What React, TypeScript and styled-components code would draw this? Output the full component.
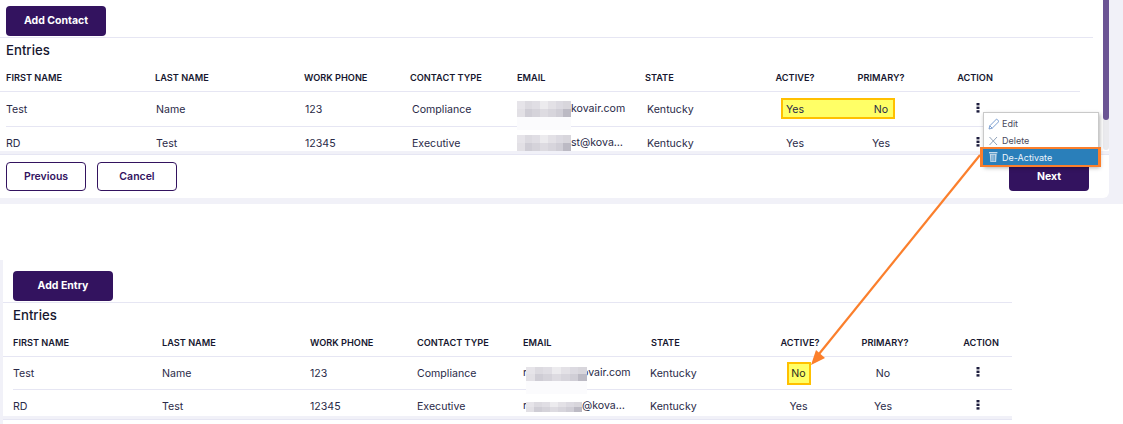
import styled, { createGlobalStyle } from "styled-components";

interface Contact {
  first: string;
  last: string;
  phone: string;
  type: string;
  state: string;
  active: string;
  primary: string;
}

const contacts: Contact[] = [
  { first: "Test", last: "Name", phone: "123", type: "Compliance", state: "Kentucky", active: "Yes", primary: "No" },
  { first: "RD", last: "Test", phone: "12345", type: "Executive", state: "Kentucky", active: "Yes", primary: "Yes" },
];

const pixelShades = [
  ["#e6e4e9", "#dcdae0", "#e0dee4", "#ecebee", "#e3e1e6", "#dcdae1", "#d8d6dc"],
  ["#e2e0e5", "#cfcdd5", "#d5d3da", "#dddbe1", "#d7d5dc", "#d0ced6", "#bcbac4"],
];

interface PixelProps {
  $left: number;
  $top: number;
  $width: number;
  $rowHeight: number;
  $tail?: boolean;
}

function Pixels(props: PixelProps) {
  return (
    <PixelWrap {...props}>
      {pixelShades.map((row, r) => (
        <PixelRow key={r} $height={props.$rowHeight}>
          {row.map((c, i) => (
            <Pixel key={i} style={{ background: c }} />
          ))}
        </PixelRow>
      ))}
      {props.$tail && <PixelTail />}
    </PixelWrap>
  );
}

function Kebab() {
  return (
    <svg width="4" height="10" viewBox="0 0 4 10">
      <rect x="0.5" y="0" width="3" height="2.4" fill="#1c1c3c" />
      <rect x="0.5" y="3.6" width="3" height="2.4" fill="#1c1c3c" />
      <rect x="0.5" y="7.2" width="3" height="2.4" fill="#1c1c3c" />
    </svg>
  );
}

function Table({ variant }: { variant: "top" | "bottom" }) {
  const isTop = variant === "top";
  const columns = isTop
    ? "149px 149px 106px 107px 128px 100px 100px 72px 1fr"
    : "149px 148px 107px 106px 128px 100px 98px 68px 1fr";
  return (
    <>
      <HeadRow $columns={columns}>
        <Head>FIRST NAME</Head>
        <Head>LAST NAME</Head>
        <Head>WORK PHONE</Head>
        <Head>CONTACT TYPE</Head>
        <Head>EMAIL</Head>
        <Head>STATE</Head>
        <Head $center>ACTIVE?</Head>
        <Head $center $pad={isTop ? "0" : "0 0 0 4px"}>PRIMARY?</Head>
        <Head $center $pad={isTop ? "0 47px 0 0" : "0 0 0 33px"}>ACTION</Head>
      </HeadRow>
      {contacts.map((c, i) => (
        <Row
          key={c.first}
          $columns={columns}
          $height={i === 0 ? (isTop ? 35 : 33) : isTop ? 24 : 26}
          $lift={i === 0 ? 0 : isTop ? 8 : 6}
          $rule={i === 0}
        >
          <Cell>{c.first}</Cell>
          <Cell $pad={isTop ? "0 0 0 1px" : "0"}>{c.last}</Cell>
          <Cell $pad={isTop ? "0 0 0 1px" : "0"}>{c.phone}</Cell>
          <Cell $pad={isTop ? "0 0 0 2px" : "0"}>{c.type}</Cell>
          <EmailCell>
            {isTop ? (
              <>
                <EmailText $offset={54}>{i === 0 ? "kovair.com" : "st@kova…"}</EmailText>
                <Pixels $left={0} $top={0} $width={54} $rowHeight={8} $tail={i === 0} />
              </>
            ) : (
              <>
                <EmailText $offset={0}>r</EmailText>
                <EmailText $offset={59}>{i === 0 ? "ovair.com" : "@kova…"}</EmailText>
                {i === 0 ? (
                  <Pixels $left={3} $top={2} $width={61} $rowHeight={7} $tail />
                ) : (
                  <Pixels $left={3} $top={4} $width={56} $rowHeight={5} />
                )}
              </>
            )}
          </EmailCell>
          <Cell $pad={isTop ? "0 0 0 2px" : "0 1px 0 0"} $shift={isTop ? 0 : -1}>{c.state}</Cell>
          <Cell $center $pad={isTop ? "0" : "0 3px 0 0"}>
            {!isTop && i === 0 ? <Mark>No</Mark> : c.active}
          </Cell>
          <Cell $center>{isTop && i === 0 ? "No" : c.primary}</Cell>
          <Cell $center $pad={isTop ? "0 42px 0 0" : "0 0 0 27px"}>
            <Kebab />
          </Cell>
        </Row>
      ))}
    </>
  );
}

function App() {
  return (
    <Page>
      <GlobalStyle />
      <TopFrame>
        <TopPanel>
          <Toolbar $inset={16}>
            <PrimaryBtn>Add Contact</PrimaryBtn>
          </Toolbar>
          <Title>Entries</Title>
          <Table variant="top" />
          <Band />
          <Footer>
            <BtnGroup>
              <OutlineBtn>Previous</OutlineBtn>
              <OutlineBtn>Cancel</OutlineBtn>
            </BtnGroup>
            <PrimaryBtn $small>Next</PrimaryBtn>
          </Footer>
          <Highlight />
          <ScrollTrack>
            <ScrollThumb />
          </ScrollTrack>
          <Menu>
            <MenuItem>
              <svg width="12" height="12" viewBox="0 0 12 12" fill="none" stroke="#6d94cc" strokeWidth="0.9">
                <path d="M1 11l.8-3.2L8.6 1l2.4 2.4-6.8 6.8z" />
                <path d="M1.8 7.8l2.4 2.4" />
              </svg>
              Edit
            </MenuItem>
            <MenuItem>
              <svg width="12" height="12" viewBox="0 0 12 12" fill="none" stroke="#8597b0" strokeWidth="0.9">
                <path d="M1.5 2l7.5 8M9 2l-7.5 8" />
              </svg>
              Delete
            </MenuItem>
            <ActiveItem>
              <svg width="12" height="12" viewBox="0 0 12 12" fill="#c5d9ea">
                <rect x="1" y="1" width="8.4" height="1.4" />
                <path d="M1.8 3h6.8l-.5 8H2.3z" />
                <path d="M3.8 3.8v6.4M5.2 3.8v6.4M6.6 3.8v6.4" stroke="#2a7fba" strokeWidth="0.6" />
              </svg>
              De-Activate
            </ActiveItem>
          </Menu>
        </TopPanel>
      </TopFrame>
      <BottomPanel>
        <Toolbar $inset={0}>
          <PrimaryBtn>Add Entry</PrimaryBtn>
        </Toolbar>
        <Title>Entries</Title>
        <Table variant="bottom" />
        <Band />
      </BottomPanel>
      <Arrow width="1123" height="424" viewBox="0 0 1123 424">
        <path d="M980 155L819 354" stroke="#fb7f2c" strokeWidth="2.2" fill="none" />
        <path d="M811 365L816 350L825 358z" fill="#fb7f2c" />
      </Arrow>
    </Page>
  );
}

const GlobalStyle = createGlobalStyle`
  html, body {
    margin: 0;
    padding: 0;
    background: #fff;
    overflow: hidden;
  }
  body {
    font-family: Inter, "Liberation Sans", sans-serif;
    color: #23233f;
  }
`;

const Page = styled.div`
  position: relative;
  width: 1123px;
  height: 424px;
  overflow: hidden;
  background: #fff;
`;

const TopFrame = styled.div`
  height: 204px;
  background: #f1f1f8;
`;

const TopPanel = styled.div`
  --lead: 6px;
  position: relative;
  width: 1109px;
  height: 198px;
  box-sizing: border-box;
  padding-top: 6px;
  background: #fff;
  border-bottom-right-radius: 6px;
`;

const BottomPanel = styled.div`
  --lead: 10px;
  width: 1012px;
  height: 164px;
  margin-top: 56px;
  padding-top: 11px;
  box-sizing: border-box;
  border-left: 3px solid #f1f1f8;
`;

const Toolbar = styled.div<{ $inset: number }>`
  height: 30px;
  margin-right: ${(p) => p.$inset}px;
  padding-left: var(--lead);
  padding-bottom: 1px;
  border-bottom: 1px solid #e6e6f3;
`;

const PrimaryBtn = styled.button<{ $small?: boolean }>`
  display: block;
  width: ${(p) => (p.$small ? "80px" : "100px")};
  height: ${(p) => (p.$small ? "29px" : "30px")};
  padding: 0 0 1px;
  border: none;
  border-radius: 4px;
  background: #33135f;
  color: #fff;
  font-family: inherit;
  font-size: 10.5px;
  font-weight: 700;
`;

const Title = styled.div`
  height: 26px;
  padding-left: var(--lead);
  line-height: 24px;
  font-size: 13.2px;
  font-weight: 500;
  color: #17172f;
`;

const HeadRow = styled.div<{ $columns: string }>`
  display: grid;
  grid-template-columns: ${(p) => p.$columns};
  align-items: center;
  width: 1080px;
  max-width: 100%;
  height: 28px;
  padding-left: var(--lead);
  box-sizing: border-box;
  border-bottom: 1px solid #e6e6f3;
`;

const Row = styled.div<{ $columns: string; $height: number; $lift: number; $rule: boolean }>`
  position: relative;
  z-index: 1;
  display: grid;
  grid-template-columns: ${(p) => p.$columns};
  align-items: center;
  width: calc(1080px - var(--lead));
  max-width: calc(100% - var(--lead));
  height: ${(p) => p.$height}px;
  margin-left: var(--lead);
  padding-top: ${(p) => p.$lift}px;
  box-sizing: border-box;
  border-bottom: ${(p) => (p.$rule ? "1px solid #e6e6f3" : "none")};
`;

const Head = styled.div<{ $center?: boolean; $pad?: string }>`
  padding: ${(p) => p.$pad || "0"};
  font-size: 9.2px;
  font-weight: 600;
  color: #17172f;
  white-space: nowrap;
  text-align: ${(p) => (p.$center ? "center" : "left")};
`;

const Cell = styled.div<{ $center?: boolean; $pad?: string; $shift?: number }>`
  padding: ${(p) => p.$pad || "0"};
  margin-left: ${(p) => p.$shift || 0}px;
  font-size: 10.6px;
  color: #2a2a48;
  white-space: nowrap;
  text-align: ${(p) => (p.$center ? "center" : "left")};
`;

const EmailCell = styled.div`
  position: relative;
  height: 16px;
  font-size: 10.6px;
  line-height: 16px;
  color: #2a2a48;
  white-space: nowrap;
`;

const EmailText = styled.span<{ $offset: number }>`
  position: absolute;
  left: ${(p) => p.$offset}px;
  top: 0;
`;

const PixelWrap = styled.div<PixelProps>`
  position: absolute;
  left: ${(p) => p.$left}px;
  top: ${(p) => p.$top}px;
  width: ${(p) => p.$width}px;
  display: flex;
  flex-direction: column;
`;

const PixelRow = styled.div<{ $height: number }>`
  display: flex;
  height: ${(p) => p.$height}px;
`;

const Pixel = styled.span`
  flex: 1;
`;

const PixelTail = styled.div`
  height: 13px;
  background: #fbfbfd;
`;

const Mark = styled.span`
  display: inline-block;
  width: 24px;
  height: 23px;
  line-height: 19px;
  box-sizing: border-box;
  border: 2px solid #ffc000;
  background: #ffff66;
  color: #2a2a20;
`;

const Band = styled.div`
  height: 4px;
  box-sizing: border-box;
  background: #f1f1f8;
  border-bottom: 1px solid #e6e6f3;
`;

const Footer = styled.div`
  display: flex;
  justify-content: space-between;
  padding: 7px 20px 0 6px;
`;

const BtnGroup = styled.div`
  display: flex;
  gap: 11px;
`;

const OutlineBtn = styled.button`
  width: 80px;
  height: 29px;
  padding: 0;
  border: 1px solid #33135f;
  border-radius: 4px;
  background: #fff;
  color: #33135f;
  font-family: inherit;
  font-size: 10.5px;
  font-weight: 600;
`;

const Highlight = styled.div`
  position: absolute;
  left: 781px;
  top: 98px;
  width: 114px;
  height: 21px;
  box-sizing: border-box;
  border: 2px solid #ffc000;
  background: #ffff66;
`;

const ScrollTrack = styled.div`
  position: absolute;
  left: 1103px;
  top: 0;
  width: 6px;
  height: 150px;
  border-radius: 0 0 3px 3px;
  background: #eaeaee;
`;

const ScrollThumb = styled.div`
  height: 120px;
  border-radius: 0 0 3px 3px;
  background: #6b5494;
`;

const Menu = styled.div`
  position: absolute;
  left: 983px;
  top: 112px;
  z-index: 3;
  width: 116px;
  height: 54px;
  box-sizing: border-box;
  padding-top: 2px;
  background: #fff;
  border: 1px solid #c9c9c9;
  box-shadow: 1px 2px 4px rgba(0, 0, 0, 0.3);
`;

const MenuItem = styled.div`
  display: flex;
  align-items: center;
  gap: 2px;
  height: 17px;
  padding-left: 4px;
  font-size: 9px;
  color: #4a4a5c;
`;

const ActiveItem = styled.div`
  position: absolute;
  left: -4px;
  top: 34px;
  display: flex;
  align-items: center;
  gap: 2px;
  width: 121px;
  height: 20px;
  box-sizing: border-box;
  padding-left: 5px;
  border: solid #fb7f2c;
  border-width: 2px 3px;
  background: #2a7fba;
  color: #eef5fb;
  font-size: 9px;
`;

const Arrow = styled.svg`
  position: absolute;
  left: 0;
  top: 0;
  z-index: 2;
  pointer-events: none;
`;

export default App;
